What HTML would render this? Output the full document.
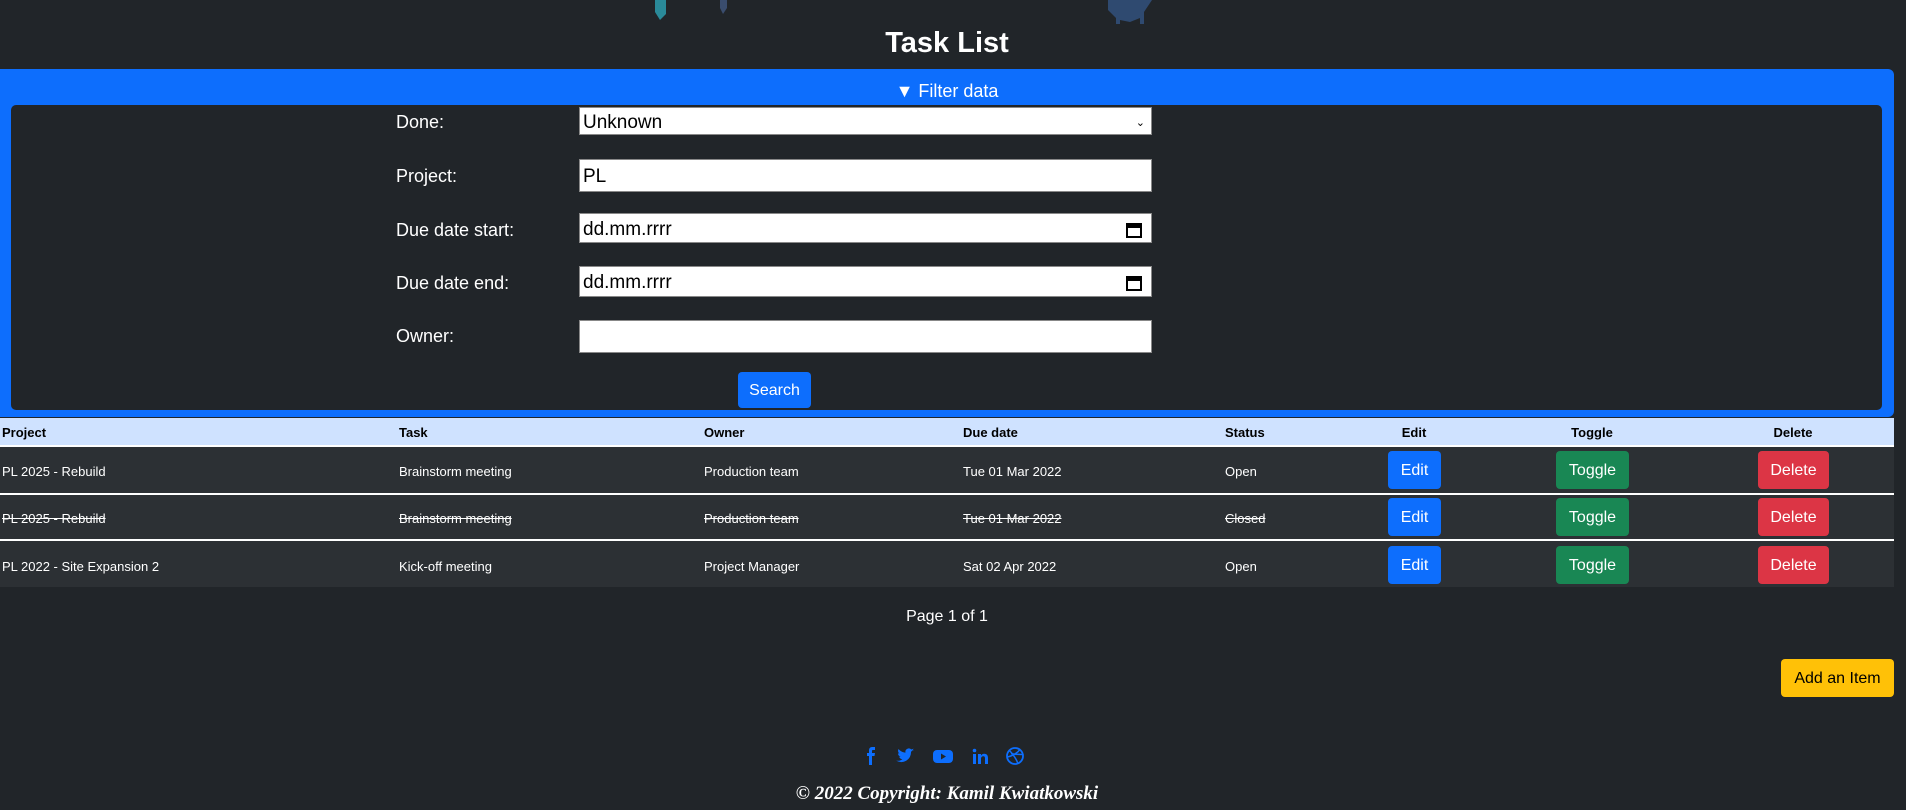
<!DOCTYPE html>
<html><head><meta charset="utf-8"><style>
*{box-sizing:border-box;margin:0;padding:0}
body{width:1906px;height:810px;background:#212529;font-family:"Liberation Sans",sans-serif;color:#fff;position:relative;overflow:hidden}
.abs{position:absolute}
h1{position:absolute;left:0;width:1894px;text-align:center;top:27px;font-size:29px;font-weight:bold}
.panel{left:0;top:69px;width:1894px;height:348px;background:#0d6efd;border-radius:0 6px 6px 0}
.fd{left:0;width:1894px;text-align:center;top:81px;font-size:18px}
.inner{left:11px;top:105px;width:1871px;height:305px;background:#212529;border-radius:5px}
.lbl{left:396px;font-size:18px}
.inp{left:579px;width:573px;background:#fff;border:1px solid #888;color:#000;font-size:19px;padding-left:3px;padding-top:3px;display:flex;align-items:center}
.btn{border-radius:4px;color:#fff;font-size:16px;display:flex;align-items:center;justify-content:center;padding-top:2px}
.th{top:418px;left:0;width:1894px;height:27px;background:#cfe2ff}
.h{color:#000;font-weight:bold;font-size:13px;top:425px}
.row{left:0;width:1894px;background:#2c3034}
.c{font-size:13px}
.s{text-decoration:line-through}
</style></head><body>
<svg class="abs" style="left:640px;top:0" width="120" height="26"><path d="M15 0v12l5 8 6-6V0z" fill="#2a8a99"/><path d="M80 0v8l3 6 4-6V0z" fill="#3a4d6e"/></svg>
<svg class="abs" style="left:1100px;top:0" width="100" height="26"><path d="M8 0v10l8 8v6h4v-4l10 2 10-4v6h4V12l8-12z" fill="#2f4a70"/></svg>
<h1>Task List</h1>
<div class="abs panel"></div>
<div class="abs fd">▼ Filter data</div>
<div class="abs inner"></div>
<div class="abs lbl" style="top:112px">Done:</div>
<div class="abs lbl" style="top:166px">Project:</div>
<div class="abs lbl" style="top:220px">Due date start:</div>
<div class="abs lbl" style="top:273px">Due date end:</div>
<div class="abs lbl" style="top:326px">Owner:</div>
<div class="abs inp" style="top:107px;height:28px;justify-content:space-between;padding-right:6px">Unknown<span style="font-size:11px">⌄</span></div>
<div class="abs inp" style="top:159px;height:33px">PL</div>
<div class="abs inp" style="top:213px;height:30px;justify-content:space-between;padding-right:8px">dd.mm.rrrr<svg width="18" height="18"><rect x="2" y="3" width="14" height="13" fill="none" stroke="#000" stroke-width="2"/><rect x="2" y="3" width="14" height="4" fill="#000"/></svg></div>
<div class="abs inp" style="top:266px;height:31px;justify-content:space-between;padding-right:8px">dd.mm.rrrr<svg width="18" height="18"><rect x="2" y="3" width="14" height="13" fill="none" stroke="#000" stroke-width="2"/><rect x="2" y="3" width="14" height="4" fill="#000"/></svg></div>
<div class="abs inp" style="top:320px;height:33px"></div>
<div class="abs btn" style="left:738px;top:372px;width:73px;height:36px;background:#0d6efd">Search</div>
<div class="abs th"></div>
<div class="abs h" style="left:2px">Project</div>
<div class="abs h" style="left:399px">Task</div>
<div class="abs h" style="left:704px">Owner</div>
<div class="abs h" style="left:963px">Due date</div>
<div class="abs h" style="left:1225px">Status</div>
<div class="abs h" style="left:1394px;width:40px;text-align:center">Edit</div>
<div class="abs h" style="left:1562px;width:60px;text-align:center">Toggle</div>
<div class="abs h" style="left:1763px;width:60px;text-align:center">Delete</div>
<div class="abs row" style="top:447px;height:46px"></div>
<div class="abs row" style="top:495px;height:44px"></div>
<div class="abs row" style="top:541px;height:46px"></div>
<div class="abs" style="top:445px;left:0;width:1894px;height:2px;background:#fff"></div>
<div class="abs" style="top:493px;left:0;width:1894px;height:2px;background:#fff"></div>
<div class="abs" style="top:539px;left:0;width:1894px;height:2px;background:#fff"></div>

<div class="abs c" style="top:464px;left:2px">PL 2025 - Rebuild</div>
<div class="abs c" style="top:464px;left:399px">Brainstorm meeting</div>
<div class="abs c" style="top:464px;left:704px">Production team</div>
<div class="abs c" style="top:464px;left:963px">Tue 01 Mar 2022</div>
<div class="abs c" style="top:464px;left:1225px">Open</div>

<div class="abs c s" style="top:511px;left:2px">PL 2025 - Rebuild</div>
<div class="abs c s" style="top:511px;left:399px">Brainstorm meeting</div>
<div class="abs c s" style="top:511px;left:704px">Production team</div>
<div class="abs c s" style="top:511px;left:963px">Tue 01 Mar 2022</div>
<div class="abs c s" style="top:511px;left:1225px">Closed</div>

<div class="abs c" style="top:559px;left:2px">PL 2022 - Site Expansion 2</div>
<div class="abs c" style="top:559px;left:399px">Kick-off meeting</div>
<div class="abs c" style="top:559px;left:704px">Project Manager</div>
<div class="abs c" style="top:559px;left:963px">Sat 02 Apr 2022</div>
<div class="abs c" style="top:559px;left:1225px">Open</div>

<div class="abs btn" style="left:1388px;top:451px;width:53px;height:38px;background:#0d6efd">Edit</div>
<div class="abs btn" style="left:1556px;top:451px;width:73px;height:38px;background:#198754">Toggle</div>
<div class="abs btn" style="left:1758px;top:451px;width:71px;height:38px;background:#dc3545">Delete</div>
<div class="abs btn" style="left:1388px;top:498px;width:53px;height:38px;background:#0d6efd">Edit</div>
<div class="abs btn" style="left:1556px;top:498px;width:73px;height:38px;background:#198754">Toggle</div>
<div class="abs btn" style="left:1758px;top:498px;width:71px;height:38px;background:#dc3545">Delete</div>
<div class="abs btn" style="left:1388px;top:546px;width:53px;height:38px;background:#0d6efd">Edit</div>
<div class="abs btn" style="left:1556px;top:546px;width:73px;height:38px;background:#198754">Toggle</div>
<div class="abs btn" style="left:1758px;top:546px;width:71px;height:38px;background:#dc3545">Delete</div>

<div class="abs" style="left:0;width:1894px;text-align:center;top:608px;font-size:16px">Page 1 of 1</div>
<div class="abs btn" style="left:1781px;top:659px;width:113px;height:38px;background:#ffc107;color:#000">Add an Item</div>

<svg class="abs" style="left:860px;top:745px" width="180" height="22" fill="#0d6efd">
<path d="M15 2h-3c-2 0-3 1.5-3 3.5V8H7v3h2v9h3v-9h2.5l.5-3h-3V6c0-.7.4-1 1-1H15z"/>
<path d="M54 5c-.7.3-1.4.5-2 .6.7-.5 1.3-1.2 1.5-2-.7.4-1.5.7-2.2.9a3.4 3.4 0 0 0-5.8 3.1c-2.8-.1-5.3-1.5-7-3.6-.9 1.6-.4 3.6 1 4.6-.5 0-1-.2-1.5-.4 0 1.7 1.2 3.1 2.7 3.4-.5.1-1 .2-1.5.1.4 1.4 1.7 2.4 3.2 2.4A6.9 6.9 0 0 1 36 15.500a9.700 9.700 0 0 0 15-8.700c.7-.5 1.300-1.100 1.800-1.800z"/>
<rect x="73" y="5" width="20" height="13" rx="4"/><path d="M81 8.5v6l5-3z" fill="#212529"/>
<rect x="113" y="9" width="3" height="10"/><circle cx="114.5" cy="5.5" r="1.8"/><path d="M118 9h3v1.5c.6-1 1.8-1.800 3.300-1.800 2.700 0 3.700 1.800 3.700 4.300v6h-3v-5.500c0-1.300-.4-2.200-1.600-2.200-1.300 0-2.400.9-2.400 2.400v5.300h-3z"/>
<circle cx="155" cy="11" r="8" fill="none" stroke="#0d6efd" stroke-width="1.8"/><path d="M149 5c4 4 8 10 9 14M147.500 12c4-1 9-3 12.500-7.500M151 8.500c3 1 8 1 11.500 1" fill="none" stroke="#0d6efd" stroke-width="1.5"/>
</svg>
<div class="abs" style="left:0;width:1894px;text-align:center;top:783px;font-size:19px;font-weight:bold;font-style:italic;font-family:'Liberation Serif',serif">© 2022 Copyright: Kamil Kwiatkowski</div>
</body></html>
